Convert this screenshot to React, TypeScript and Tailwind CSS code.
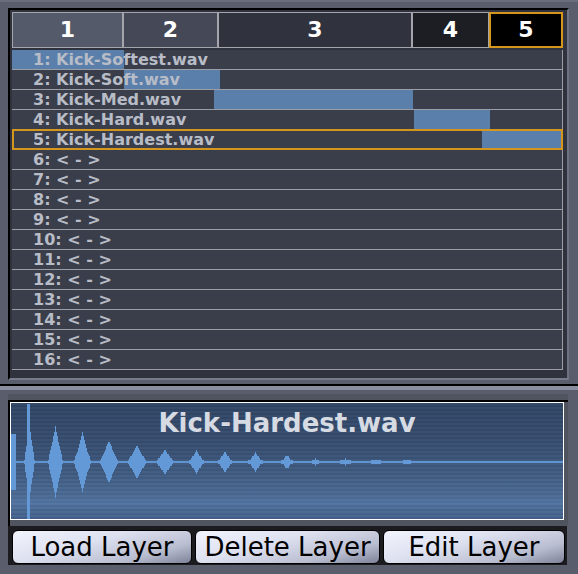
import React from "react";

const headers = [
  { n: "1", w: 111, cls: "bg-[#555a6b] border border-[#a4a6ac]" },
  { n: "2", w: 95, cls: "bg-[#454957] border border-[#a4a6ac]" },
  { n: "3", w: 194, cls: "bg-[#30333e] border border-[#a4a6ac]" },
  { n: "4", w: 77, cls: "bg-[#1d1e24] border border-[#a4a6ac]" },
  { n: "5", w: 74, cls: "bg-black border-2 border-[#d4961c]" },
];

const files = [
  "Kick-Softest.wav",
  "Kick-Soft.wav",
  "Kick-Med.wav",
  "Kick-Hard.wav",
  "Kick-Hardest.wav",
];

// velocity bars: [left, width] relative to row start (x=12)
const bars: ([number, number] | null)[] = [
  [0, 112],
  [112, 96],
  [202, 199],
  [402, 76],
  [470, 81],
];

type Burst = [number, number, number, boolean?];
const bursts: Burst[] = [
  [13, 5, 27, true],
  [29.5, 10, 38],
  [28.5, 3, 57, true],
  [55.5, 14, 35],
  [82.5, 16, 29],
  [109, 17, 22],
  [137, 17, 17],
  [165, 16, 13],
  [196.5, 14, 12],
  [225, 13, 11],
  [255.5, 14, 9],
  [287, 11, 7],
  [315.5, 7, 4],
  [345.5, 11, 3],
  [376, 10, 3],
  [407, 8, 3],
];

function waveRects() {
  const out: { x: number; h: number }[] = [];
  bursts.forEach(([cx, w, a, flat]) => {
    const half = w / 2;
    for (let x = Math.floor(cx - half); x <= Math.ceil(cx + half); x++) {
      const t = Math.abs(x + 0.5 - cx) / half;
      if (t > 1) continue;
      let h = flat ? a : a * Math.max(0.34 * (1 - Math.pow(t, 8)), 1 - t);
      h = Math.max(2, Math.round(h / 2) * 2);
      out.push({ x: x - 11, h });
    }
  });
  return out;
}

function Waveform() {
  const rects = waveRects();
  const cy = 59;
  return (
    <svg width={552} height={116} className="absolute left-0 top-0">
      <rect x={0} y={cy - 1} width={552} height={2} fill="#5f94d2" />
      {rects.map((r, i) => (
        <rect key={i} x={r.x} y={cy - r.h} width={1} height={r.h * 2} fill="#6399d6" />
      ))}
    </svg>
  );
}

export default function App() {
  const rows = Array.from({ length: 16 }, (_, i) => {
    const name = i < files.length ? files[i] : "< - >";
    return { label: `${i + 1}: ${name}`, bar: bars[i] ?? null, sel: i === 4 };
  });

  return (
    <div
      className="w-[578px] h-[574px] bg-[#5a5e6c] overflow-hidden border-t-[2px] border-t-[#6a6e7c]"
      style={{ fontFamily: '"DejaVu Sans", Verdana, sans-serif' }}
    >
      {/* top panel */}
      <div className="pt-[6px] pl-[8px] pr-[9px]">
        <div className="h-[372px] border-2 border-t-black border-l-black border-r-[#6e7384] border-b-[#767b8c] bg-[#30333e] p-[2px]">
          <div className="flex w-[551px] h-[36px]">
            {headers.map((h) => (
              <div
                key={h.n}
                className={`${h.cls} flex items-center justify-center text-white font-bold text-[22px] leading-none`}
                style={{ width: h.w }}
              >
                {h.n}
              </div>
            ))}
          </div>
          <div className="mt-[2px] w-[551px] border-r border-[#9c9ea6]">
            {rows.map((r, i) => (
              <div
                key={i}
                className="relative h-[20px] bg-[#3a3e4a] border-b border-[#9c9ea6] flex items-center"
              >
                {r.bar && (
                  <div
                    className="absolute top-0 h-[19px] bg-[#5a7fab]"
                    style={{ left: r.bar[0], width: r.bar[1] }}
                  />
                )}
                <span className="relative pl-[21px] text-[16px] font-bold text-[#b8bcc7] leading-none whitespace-nowrap">
                  {r.label}
                </span>
                {r.sel && (
                  <div className="absolute left-0 right-[-1px] top-[-1px] bottom-[-1px] border-2 border-[#d4961c] pointer-events-none" />
                )}
              </div>
            ))}
          </div>
        </div>
      </div>

      {/* separator */}
      <div className="mt-[4px] h-[2px] bg-black" />
      <div className="h-[4px] bg-[#8a8ea0]" />
      <div className="h-[4px]" />
      <div className="h-[6px] ml-[8px] w-[560px] bg-[#50545f]" />

      {/* waveform frame */}
      <div className="ml-[8px] w-[560px] bg-[#50545f] border-t-2 border-l-2 border-t-black border-l-black pr-[2px]">
        <div className="relative w-[554px] h-[118px] border border-white bg-[linear-gradient(to_bottom,#2f4463_0%,#364d70_35%,#3f5a80_60%,#4a6a94_80%,#5274a2_86%,#486892_92%,#42608a_100%)]">
          <div className="absolute inset-0 bg-[repeating-linear-gradient(to_bottom,rgba(255,255,255,0.03)_0px,rgba(255,255,255,0.03)_2px,rgba(0,0,0,0.03)_2px,rgba(0,0,0,0.03)_4px)]" />
          <Waveform />
          <div className="relative pt-[7px] text-center text-[26px] font-bold leading-none text-[#d6dae2]">
            Kick-Hardest.wav
          </div>
        </div>
        <div className="h-[6px]" />
      </div>

      {/* buttons */}
      <div className="ml-[8px] w-[559px] h-[39px] bg-[#1c1c20] pt-[4px] pl-[4px] flex gap-[3px]">
        {[
          ["Load Layer", 180],
          ["Delete Layer", 185],
          ["Edit Layer", 182],
        ].map(([t, w]) => (
          <div
            key={t as string}
            className="h-[34px] rounded-[6px] border border-black bg-[linear-gradient(165deg,#f2f4fd_0%,#dde0ef_40%,#b9bdd0_75%,#7e8299_100%)] flex items-center justify-center text-black text-[26px] leading-none"
            style={{ width: w as number }}
          >
            {t}
          </div>
        ))}
      </div>
    </div>
  );
}
